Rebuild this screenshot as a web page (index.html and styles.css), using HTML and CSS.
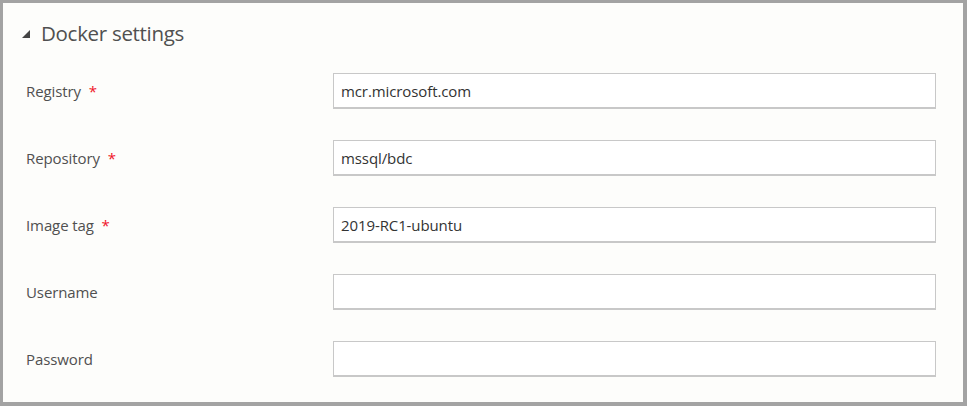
FILE: index.html
```html
<!DOCTYPE html>
<html>
<head>
<meta charset="utf-8">
<link rel="stylesheet" href="styles.css">
</head>
<body>
<div class="panel">
  <div class="header">
    <svg class="caret" width="8" height="8" viewBox="0 0 8 8"><polygon points="8,0 8,8 0,8" fill="#444"/></svg>
    <span class="title">Docker settings</span>
  </div>
  <div class="form">
    <div class="row">
      <label class="label">Registry <span class="req">*</span></label>
      <div class="input">mcr.microsoft.com</div>
    </div>
    <div class="row">
      <label class="label">Repository <span class="req">*</span></label>
      <div class="input">mssql/bdc</div>
    </div>
    <div class="row">
      <label class="label">Image tag <span class="req">*</span></label>
      <div class="input">2019-RC1-ubuntu</div>
    </div>
    <div class="row">
      <label class="label">Username</label>
      <div class="input"></div>
    </div>
    <div class="row">
      <label class="label">Password</label>
      <div class="input"></div>
    </div>
  </div>
</div>
</body>
</html>
```
FILE: styles.css
```css
html, body {
  margin: 0;
  padding: 0;
  background: #fdfdfb;
}
body {
  font-family: "Open Sans", "Noto Sans", sans-serif;
  color: #444;
}
.panel {
  box-sizing: border-box;
  width: 967px;
  height: 406px;
  border-style: solid;
  border-color: #a3a3a3;
  border-width: 3px 4px 4px 3px;
  background: #fdfdfb;
  padding: 0 27px 0 23px;
}
.header {
  height: 70px;
  display: flex;
  align-items: center;
  margin-left: -4px;
  box-sizing: border-box;
  padding-bottom: 10px;
}
.caret {
  margin-right: 11px;
  margin-top: 2px;
}
.title {
  font-size: 20.5px;
  color: #505050;
  letter-spacing: -0.3px;
}
.form {
  display: flex;
  flex-direction: column;
  gap: 31px;
}
.row {
  display: flex;
  align-items: center;
  height: 36px;
}
.label {
  width: 307px;
  font-size: 15px;
  color: #505050;
  letter-spacing: -0.1px;
}
.req {
  color: #f0142a;
  margin-left: 4px;
}
.input {
  box-sizing: border-box;
  width: 603px;
  height: 36px;
  background: #fff;
  border: 1px solid #c8c8c8;
  border-bottom-width: 2px;
  padding: 0 7px;
  display: flex;
  align-items: center;
  font-size: 15px;
  color: #333;
  letter-spacing: -0.1px;
}
```
